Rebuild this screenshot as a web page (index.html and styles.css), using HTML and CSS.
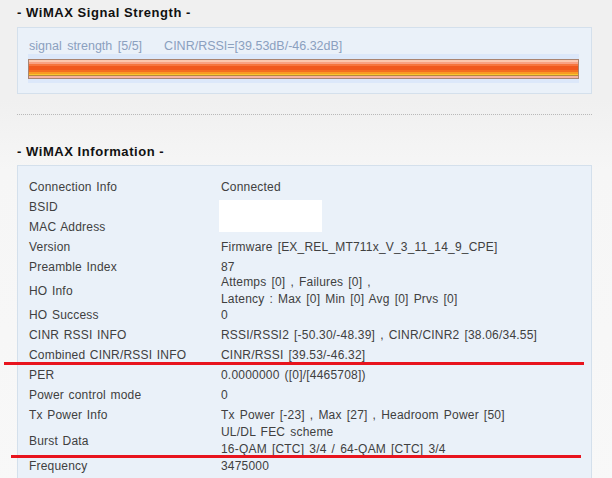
FILE: index.html
```html
<!DOCTYPE html>
<html>
<head>
<meta charset="utf-8">
<link rel="stylesheet" href="styles.css">
</head>
<body>
<div class="page">
  <h2 class="sec-title">- WiMAX Signal Strength -</h2>
  <div class="box signal-box">
    <div class="signal-text"><span>signal strength [5/5]</span><span>CINR/RSSI=[39.53dB/-46.32dB]</span></div>
    <div class="track"><div class="bar" style="width:100%"></div></div>
  </div>
  <div class="divider"></div>
  <h2 class="sec-title sec-title-2">- WiMAX Information -</h2>
  <div class="box info-box">
    <div class="row"><div class="label">Connection Info</div><div class="value">Connected</div></div>
    <div class="row"><div class="label">BSID</div><div class="value"></div></div>
    <div class="row"><div class="label">MAC Address</div><div class="value"></div></div>
    <div class="row"><div class="label">Version</div><div class="value">Firmware [EX_REL_MT711x_V_3_11_14_9_CPE]</div></div>
    <div class="row"><div class="label">Preamble Index</div><div class="value">87</div></div>
    <div class="row row-ho"><div class="label">HO Info</div><div class="value multi">Attemps [0] , Failures [0] ,<br>Latency : Max [0] Min [0] Avg [0] Prvs [0]</div></div>
    <div class="row"><div class="label">HO Success</div><div class="value">0</div></div>
    <div class="row"><div class="label">CINR RSSI INFO</div><div class="value">RSSI/RSSI2 [-50.30/-48.39] , CINR/CINR2 [38.06/34.55]</div></div>
    <div class="row"><div class="label">Combined CINR/RSSI INFO</div><div class="value">CINR/RSSI [39.53/-46.32]</div></div>
    <div class="row"><div class="label">PER</div><div class="value">0.0000000 ([0]/[4465708])</div></div>
    <div class="row"><div class="label">Power control mode</div><div class="value">0</div></div>
    <div class="row"><div class="label">Tx Power Info</div><div class="value">Tx Power [-23] , Max [27] , Headroom Power [50]</div></div>
    <div class="row row-burst"><div class="label">Burst Data</div><div class="value multi">UL/DL FEC scheme<br>16-QAM [CTC] 3/4 / 64-QAM [CTC] 3/4</div></div>
    <div class="row"><div class="label">Frequency</div><div class="value">3475000</div></div>
    <div class="redact"></div>
  </div>
  <div class="mark mark-1"></div>
  <div class="mark mark-2"></div>
</div>
</body>
</html>
```
FILE: styles.css
```css
html, body {
  margin: 0;
  padding: 0;
}
body {
  background: linear-gradient(to bottom, #f0f0f0 0, #f0f0f0 100px, #f6f6f6 170px, #f8f8f8 100%);
  min-height: 478px;
  font-family: "Liberation Sans", Arial, sans-serif;
  font-size: 12px;
  color: #404040;
  overflow: hidden;
}
.page {
  position: relative;
  padding: 5px 0 0 17px;
  width: 575px;
}
.sec-title {
  margin: 0 0 6px 0;
  font-size: 13px;
  line-height: 16px;
  font-weight: bold;
  letter-spacing: 0.55px;
  color: #111;
}
.sec-title-2 {
  margin-top: 29px;
  margin-bottom: 5px;
}
.box {
  border: 1px solid #d4e0ec;
  background: #eaf1f9;
}
.signal-box {
  padding: 11px 12px 10px 10px;
}
.signal-text {
  display: flex;
  gap: 22px;
  padding-left: 1px;
  font-size: 12.5px;
  line-height: 15px;
  color: #8ba0bf;
}
.signal-text span:first-child {
  word-spacing: 2px;
}
.track {
  background: #dce8fa;
  padding: 5px 0 4px 0;
}
.bar {
  box-sizing: border-box;
  height: 20px;
  border: 1px solid #a98470;
  background: linear-gradient(to bottom,
    #fcc6ae 0, #fcc6ae 2px,
    #f9a184 2px, #f9a184 4px,
    #f6753f 4px, #f6753f 6px,
    #f1581f 6px, #f1581f 10px,
    #f46e1e 10px, #f46e1e 12px,
    #f89a22 12px, #f89a22 14px,
    #f9c52c 14px, #f9c52c 15px,
    #b58a3c 15px, #b58a3c 16px,
    #f7b3a0 16px, #f7b3a0 18px);
}
.divider {
  margin-top: 20px;
  border-top: 1px dotted #b9b9b9;
}
.info-box {
  position: relative;
  padding: 11px 10px 20px 11px;
}
.row {
  display: flex;
  align-items: center;
  height: 20px;
}
.row-ho {
  height: 28px;
}
.row-burst {
  height: 31px;
}
.label {
  width: 192px;
  flex: none;
  letter-spacing: 0.2px;
  word-spacing: 1px;
}
.value {
  white-space: nowrap;
  letter-spacing: 0.2px;
  word-spacing: 1.5px;
}
.value.multi {
  line-height: 17px;
}
.redact {
  position: absolute;
  left: 201px;
  top: 34px;
  width: 103px;
  height: 32px;
  background: #fff;
}
.mark {
  position: absolute;
  height: 3px;
  background: #e8141e;
}
.mark-1 {
  left: 4px;
  top: 362px;
  width: 580px;
}
.mark-2 {
  left: 11px;
  top: 455px;
  width: 570px;
}
```
